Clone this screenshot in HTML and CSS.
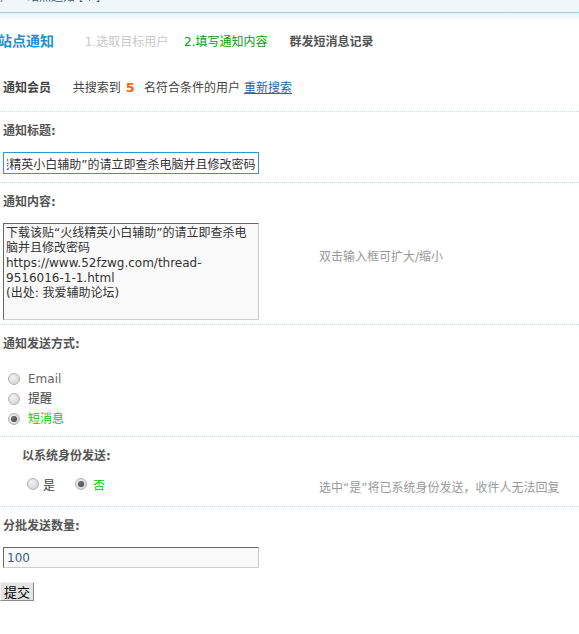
FILE: index.html
```html
<!DOCTYPE html>
<html lang="zh-CN">
<head>
<meta charset="utf-8">
<title>站点通知</title>
<link rel="stylesheet" href="styles.css">
</head>
<body>
<div class="topbar"><div class="crumb">用户 &raquo; 站点通知 [个]</div></div>
<div class="page">
  <div class="header">
    <span class="h-title">站点通知</span>
    <span class="tab tab-done">1.选取目标用户</span>
    <span class="tab tab-current">2.填写通知内容</span>
    <span class="tab tab-link">群发短消息记录</span>
  </div>

  <div class="member-row">
    <span class="b-label">通知会员</span>
    <span class="found">共搜索到</span><span class="count">5</span><span class="found-tail">名符合条件的用户</span><a class="relink" href="#">重新搜索</a>
  </div>

  <div class="row row-title">
    <div class="label">通知标题:</div>
    <input id="subject" class="text-in focused" type="text" value="下载该贴“火线精英小白辅助”的请立即查杀电脑并且修改密码">
  </div>

  <div class="row row-content">
    <div class="label">通知内容:</div>
    <div class="pair">
      <div class="cell-left">
        <textarea class="area">下载该贴“火线精英小白辅助”的请立即查杀电脑并且修改密码
https://www.52fzwg.com/thread-9516016-1-1.html
(出处: 我爱辅助论坛)</textarea>
      </div>
      <div class="tip tip-content">双击输入框可扩大/缩小</div>
    </div>
  </div>

  <div class="row row-method">
    <div class="label">通知发送方式:</div>
    <ul class="radios">
      <li><input class="rad" type="radio" name="m"><span class="opt-email">Email</span></li>
      <li><input class="rad" type="radio" name="m"><span class="opt-plain">提醒</span></li>
      <li><input class="rad" type="radio" name="m" checked><span class="opt-on">短消息</span></li>
    </ul>
  </div>

  <div class="row row-system">
    <div class="label sys-label">以系统身份发送:</div>
    <div class="pair">
      <div class="cell-left sys-opts">
        <input class="rad" type="radio" name="s"><span class="opt-plain">是</span>
        <input class="rad rad-second" type="radio" name="s" checked><span class="opt-on">否</span>
      </div>
      <div class="tip tip-system">选中“是”将已系统身份发送，收件人无法回复</div>
    </div>
  </div>

  <div class="row row-batch">
    <div class="label">分批发送数量:</div>
    <input class="text-in plain" type="text" value="100">
    <div class="submit-wrap"><button class="btn" type="button">提交</button></div>
  </div>
</div>
<script src="script.js"></script>
</body>
</html>
```

FILE: styles.css
```css
html, body {
  margin: 0;
  padding: 0;
  background: #fff;
}
body {
  font-family: "DejaVu Sans", "Noto Sans CJK SC", sans-serif;
  font-size: 12px;
  color: #444;
  overflow: hidden;
}
.topbar {
  height: 12px;
  overflow: hidden;
  background: #eff7fb;
  border-bottom: 1px solid #a9cdd8;
}
.crumb {
  margin-top: -11px;
  margin-left: -12px;
  line-height: 16px;
  font-size: 12px;
  color: #3d5b78;
  white-space: nowrap;
}
.page {
  padding-left: 3px;
  background: linear-gradient(#e7f2f8, #fff 9px) no-repeat;
  background-size: 100% 12px;
}
.header {
  padding-top: 17px;
  height: 22px;
  line-height: 22px;
  white-space: nowrap;
}
.h-title {
  font-size: 14px;
  font-weight: bold;
  color: #2490cf;
  margin-left: -5px;
}
.tab { font-size: 12px; }
.tab-done { color: #c8c8c8; margin-left: 27px; }
.tab-current { color: #0a9a0a; margin-left: 12px; }
.tab-link { color: #555; font-weight: bold; margin-left: 18px; }

.member-row {
  margin-top: 27px;
  margin-left: -3px;
  padding-left: 3px;
  line-height: 18px;
  padding-bottom: 14px;
  border-bottom: 1px dotted #c4e1f2;
  white-space: nowrap;
}
.b-label { font-weight: bold; color: #444; }
.found { margin-left: 18px; color: #444; }
.count { color: #f60; font-weight: bold; font-size: 13px; margin: 0 9px 0 5px; }
.found-tail { color: #444; }
.relink { color: #2366a8; text-decoration: underline; margin-left: 4px; }

.row {
  margin-left: -3px;
  padding-left: 3px;
  padding-top: 10px;
  border-bottom: 1px dotted #c4e1f2;
}
.label {
  line-height: 18px;
  font-weight: bold;
  color: #555;
}
.row-title { padding-bottom: 8px; }
.row-title .label { margin-bottom: 12px; }
.text-in {
  display: block;
  box-sizing: border-box;
  width: 256px;
  height: 22px;
  margin: 0;
  padding: 0 3px;
  font-family: "DejaVu Sans", "Noto Sans CJK SC", sans-serif;
  font-size: 12px;
  color: #333;
  outline: none;
}
.focused {
  border: 1px solid #2a9ad0;
  background: #fff;
}
.plain {
  height: 21px;
  border: 1px solid #ccc;
  border-top-color: #666;
  border-left-color: #666;
  background: #f9f9f9;
  color: #3a5f8a;
}
.row-content { padding-bottom: 4px; }
.row-content .label { margin-bottom: 12px; }
.pair { display: flex; align-items: flex-start; }
.cell-left { width: 316px; flex: none; }
.area {
  display: block;
  box-sizing: border-box;
  width: 256px;
  height: 97px;
  margin: 0;
  padding: 2px 2px;
  border: 1px solid #ccc;
  border-top-color: #666;
  border-left-color: #666;
  background: #f9f9f9;
  font-family: "DejaVu Sans", "Noto Sans CJK SC", sans-serif;
  font-size: 12px;
  line-height: 15px;
  color: #333;
  resize: none;
  overflow: hidden;
  outline: none;
}
.tip {
  color: #999;
  line-height: 18px;
  white-space: nowrap;
}
.tip-content { padding-top: 25px; }

.row-method { padding-bottom: 7px; }
.row-method .label { margin-bottom: 16px; }
.radios {
  list-style: none;
  margin: 0;
  padding: 0 0 0 5px;
}
.radios li {
  height: 20px;
  line-height: 20px;
  display: flex;
  align-items: center;
}
.rad {
  appearance: none;
  -webkit-appearance: none;
  box-sizing: border-box;
  width: 12px;
  height: 12px;
  margin: 0 8px 0 0;
  border: 1px solid #b4b4b4;
  border-radius: 50%;
  background: radial-gradient(circle at 40% 35%, #f4f4f4, #d6d6d6 75%);
  flex: none;
  position: relative;
}
.rad:checked::after {
  content: "";
  position: absolute;
  left: 2px;
  top: 2px;
  width: 6px;
  height: 6px;
  border-radius: 50%;
  background: radial-gradient(circle at 40% 40%, #777, #333);
}
.opt-email { color: #666; }
.opt-plain { color: #444; }
.opt-on { color: #0c0; }

.row-system { padding-bottom: 12px; }
.sys-label { padding-left: 19px; margin-bottom: 9px; }
.row-system .pair { height: 20px; }
.sys-opts {
  display: flex;
  align-items: center;
  height: 20px;
  padding-left: 24px;
  box-sizing: border-box;
}
.sys-opts .rad { margin-right: 4px; }
.sys-opts .rad-second { margin-left: 20px; margin-right: 6px; }
.tip-system { padding-top: 5px; }

.row-batch { border-bottom: none; }
.row-batch .label { margin-bottom: 12px; }
.submit-wrap { margin-top: 14px; margin-left: -3px; }
.btn {
  box-sizing: border-box;
  height: 19px;
  width: 34px;
  padding: 0;
  margin: 0;
  font-family: "Noto Sans CJK SC", sans-serif;
  font-size: 13px;
  line-height: 15px;
  color: #000;
  background: #e3e3e3;
  border: 1px solid #888;
  border-top-color: #f2f2f2;
  border-left-color: #f2f2f2;
  border-radius: 0;
}
```

FILE: script.js
```js
var s = document.getElementById('subject');
if (s) { s.scrollLeft = s.scrollWidth; }
```
